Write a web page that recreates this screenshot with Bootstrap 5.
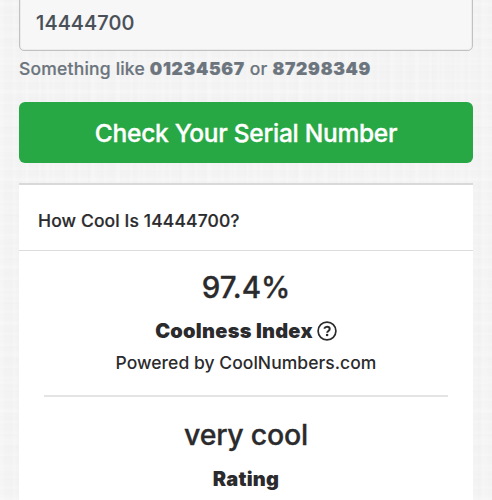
<!DOCTYPE html>
<html lang="en">
<head>
<meta charset="utf-8">
<meta name="viewport" content="width=device-width, initial-scale=1">
<title>Check Your Serial Number</title>
<link href="https://cdn.jsdelivr.net/npm/bootstrap@5.3.0/dist/css/bootstrap.min.css" rel="stylesheet">
<style>
  html { overflow: hidden; }
  body {
    height: 500px; overflow: hidden; color: #2b2b2d;
    font-family: Inter, "Liberation Sans", sans-serif;
    background-color: #f3f3f3;
    /* faint woven linen texture */
    background-image:
      repeating-linear-gradient(90deg, rgba(255,255,255,.14) 0 2px, transparent 4px 9px, rgba(0,0,0,.005) 11px, transparent 13px),
      repeating-linear-gradient(90deg, rgba(255,255,255,.14) 0 3px, transparent 6px 16px, rgba(0,0,0,.005) 19px, transparent 23px),
      repeating-linear-gradient(0deg, rgba(255,255,255,.14) 0 2px, transparent 4px 8px, rgba(0,0,0,.005) 9px, transparent 11px),
      repeating-linear-gradient(0deg, rgba(255,255,255,.14) 0 3px, transparent 6px 20px, rgba(0,0,0,.005) 23px, transparent 29px);
  }
  .page-wrap { padding: 0 19px; }
  .serial-input, .serial-input:focus {
    height: 61px; margin-top: -10px; padding: 5px 16px 0; border: 1px solid #bfc1c3;
    border-radius: 5px; background: #f7f7f7; color: #495057; font-size: 20px; font-weight: 500; letter-spacing: .1px;
    box-shadow: inset 0 0 0 1px #ececec; -webkit-text-stroke: .15px;
  }
  .hint { height: 51px; padding-top: 4px; line-height: 27px; font-size: 17.5px; font-weight: 450; letter-spacing: .2px; color: #6c757d; white-space: nowrap; -webkit-text-stroke: .2px; }
  .hint strong { font-weight: 900; letter-spacing: .7px; }
  .btn-check-serial { height: 61px; padding: 1px 0 0; border: 0; border-radius: 6px; font-size: 24.5px; font-weight: 550; letter-spacing: -.27px; color: #fff; background: #28a745; -webkit-text-stroke: .35px; }
  .btn-check-serial:hover { color: #fff; background: #218838; }
  .result-card { margin-top: 20px; height: 330px; border-top: 2px solid #d9d9d9; }
  .result-title { height: 66px; line-height: 72px; padding-left: 19px; border-bottom: 1px solid #dcdcdc; font-size: 17.5px; font-weight: 550; letter-spacing: .12px; -webkit-text-stroke: .2px; }
  .figure-value { height: 44px; line-height: 44px; font-size: 29.5px; font-weight: 550; letter-spacing: -.1px; -webkit-text-stroke: .3px; }
  .figure-value.word-value { font-size: 28.5px; letter-spacing: -.25px; }
  .figure-label { height: 32px; line-height: 32px; font-size: 20px; font-weight: 900; letter-spacing: .25px; }
  .figure-source { height: 31px; line-height: 31px; font-size: 17.5px; font-weight: 500; letter-spacing: .04px; }
  .result-body { padding: 14px 25px 0; }
  .result-body .figure-label { margin-top: 6px; }
  .divider { height: 1.5px; margin: 17px 0 16px; background: #e4e4e4; }
</style>
</head>
<body>
<main class="page-wrap">
  <form>
    <input class="form-control serial-input" type="text" value="14444700" aria-label="Serial number">
    <div class="hint">Something like <strong>01234567</strong> or <strong>87298349</strong></div>
    <button class="btn btn-check-serial w-100 d-block" type="button">Check Your Serial Number</button>
  </form>
  <section class="result-card bg-white">
    <h2 class="result-title mb-0">How Cool Is 14444700?</h2>
    <div class="result-body text-center">
      <div class="figure-value">97.4%</div>
      <div class="figure-label d-flex align-items-center justify-content-center gap-1">
        <span>Coolness Index</span>
        <svg width="20" height="20" viewBox="0 0 20 20" fill="none" stroke="currentColor" aria-hidden="true">
          <circle cx="10" cy="10" r="8.9" stroke-width="1.7"/>
          <path d="M7.2 7.7C7.8 6.3 8.8 5.7 10 5.7c1.5 0 2.7.9 2.7 2.3 0 1.9-2.5 2-2.5 3.7" stroke-width="2"/>
          <circle cx="10.1" cy="14" r="1.3" fill="currentColor" stroke="none"/>
        </svg>
      </div>
      <div class="figure-source">Powered by CoolNumbers.com</div>
      <div class="divider"></div>
      <div class="figure-value word-value">very cool</div>
      <div class="figure-label">Rating</div>
    </div>
  </section>
</main>
<script src="https://cdn.jsdelivr.net/npm/bootstrap@5.3.0/dist/js/bootstrap.bundle.min.js"></script>
</body>
</html>
